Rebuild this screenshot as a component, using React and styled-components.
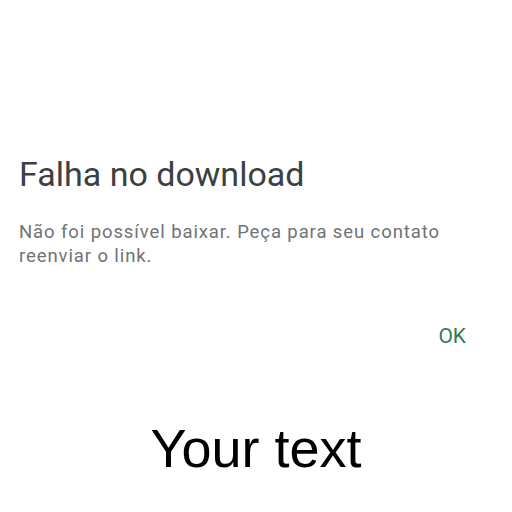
import React from 'react';
import styled, { createGlobalStyle } from 'styled-components';

const GlobalStyle = createGlobalStyle`
  html, body {
    margin: 0;
    padding: 0;
    background: #ffffff;
  }
`;

const Page = styled.div`
  width: 512px;
  height: 512px;
  display: flex;
  flex-direction: column;
  background: #ffffff;
  font-family: Roboto, "Noto Sans", sans-serif;
`;

const Dialog = styled.div`
  display: flex;
  flex-direction: column;
  padding: 151px 46px 0 19px;
`;

const Title = styled.h1`
  margin: 0;
  font-size: 34px;
  font-weight: 400;
  line-height: 46px;
  color: #3b4043;
`;

const Message = styled.p`
  margin: 24px 0 0;
  font-size: 18.5px;
  line-height: 23.5px;
  letter-spacing: 0.9px;
  color: #707376;
`;

const Actions = styled.div`
  display: flex;
  justify-content: flex-end;
  margin-top: 56px;
`;

const OkButton = styled.button`
  border: none;
  background: none;
  padding: 0;
  font-family: inherit;
  font-size: 21px;
  font-weight: 400;
  line-height: 24px;
  color: #2e7d5b;
  cursor: pointer;
`;

const Caption = styled.div`
  margin-top: 70px;
  text-align: center;
  font-family: "Liberation Sans", Arial, sans-serif;
  font-size: 54px;
  line-height: 60px;
  color: #000000;
`;

export default function App() {
  return (
    <Page>
      <GlobalStyle />
      <Dialog>
        <Title>Falha no download</Title>
        <Message>
          Não foi possível baixar. Peça para seu contato reenviar o link.
        </Message>
        <Actions>
          <OkButton>OK</OkButton>
        </Actions>
      </Dialog>
      <Caption>Your text</Caption>
    </Page>
  );
}
